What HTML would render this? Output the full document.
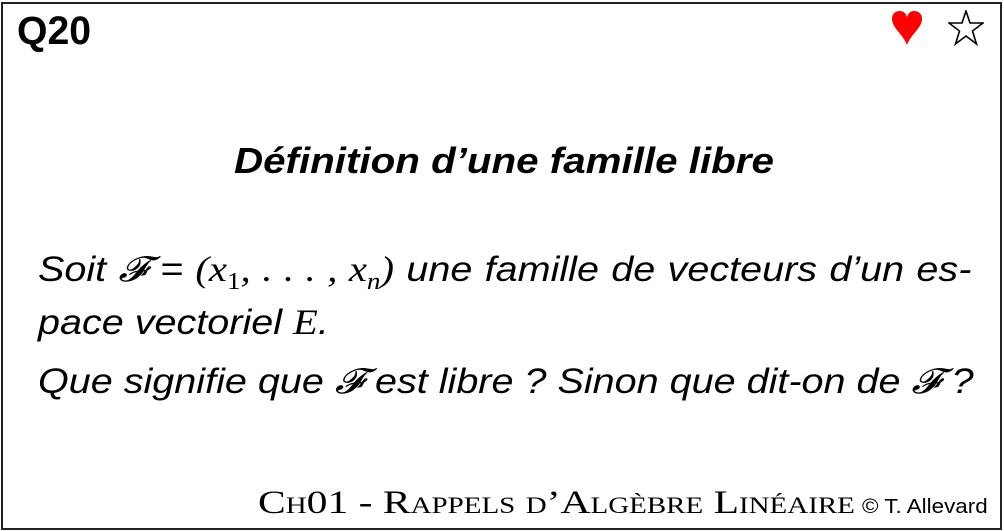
<!DOCTYPE html>
<html><head><meta charset="utf-8"><style>
html,body{margin:0;padding:0;background:#fff;}
body{width:1004px;height:531px;position:relative;overflow:hidden;font-family:"Liberation Sans",sans-serif;}
.card{position:absolute;left:1px;top:2px;width:997px;height:524px;border:2px solid #222;}
.q{position:absolute;left:17px;top:9px;font-weight:bold;font-size:40px;transform:scaleX(0.98);transform-origin:left top;}
.t{position:absolute;left:234px;top:140px;font-weight:bold;font-style:italic;font-size:36px;white-space:nowrap;transform:scaleX(1.12);transform-origin:left top;}
.l{position:absolute;left:38px;font-style:italic;font-size:35px;white-space:nowrap;width:826px;transform:scaleX(1.13);transform-origin:left top;}
.m{font-family:"Liberation Serif",serif;}
.j{text-align:justify;text-align-last:justify;}
.f{position:absolute;left:258px;top:485px;font-family:"Liberation Serif",serif;font-size:33px;white-space:nowrap;font-variant:small-caps;transform:scaleX(1.26);transform-origin:left top;}
.c{position:absolute;left:862px;top:496px;font-family:"Liberation Sans",sans-serif;font-size:20px;white-space:nowrap;transform:scaleX(1.12);transform-origin:left top;}
</style></head><body>
<div class="card"></div>
<div class="q">Q20</div>
<svg style="position:absolute;left:890px;top:10px" width="34" height="36" viewBox="0 0 34 36"><path d="M17 35 C13 24 2 18 2 9 C2 3 6 1 10 1 C14 1 16 4 17 7 C18 4 20 1 24 1 C28 1 32 3 32 9 C32 18 21 24 17 35Z" fill="#f00"/></svg>
<svg style="position:absolute;left:948px;top:10px" width="36" height="36" viewBox="0 0 36 36"><path d="M18 1 L22 13 L35 13 L24.5 21 L28.5 34 L18 26 L7.5 34 L11.5 21 L1 13 L14 13 Z" fill="#fff" stroke="#000" stroke-width="1.6"/></svg>
<div class="t">Définition d’une famille libre</div>
<div class="l j" style="top:248px">Soit 𝓕 = <span class="m" style="font-size:36px">(<i>x</i><sub style="font-style:normal;font-size:24px">1</sub>, . . . , <i>x<sub style="font-size:24px">n</sub></i>)</span> une famille de vecteurs d’un es-</div>
<div class="l" style="top:301px">pace vectoriel <span class="m" style="font-size:36px"><i>E</i></span>.</div>
<div class="l j" style="top:362px">Que signifie que 𝓕 est libre ? Sinon que dit-on de 𝓕 ?</div>
<div class="f">Ch01 - Rappels d’Algèbre Linéaire</div>
<div class="c">© T. Allevard</div>
</body></html>
